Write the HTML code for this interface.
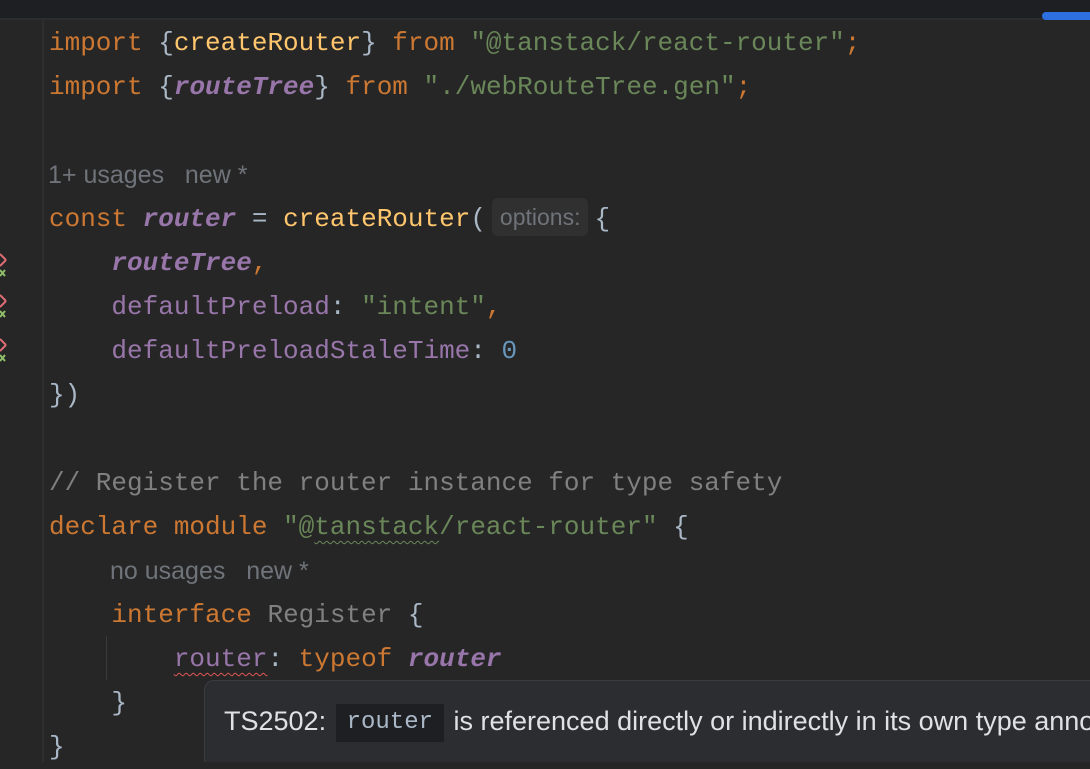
<!DOCTYPE html>
<html><head><meta charset="utf-8"><style>
html,body{margin:0;padding:0;}
body{width:1090px;height:762px;overflow:hidden;background:#262626;position:relative;font-family:"Liberation Mono",monospace;}
.top{position:absolute;left:0;top:0;width:1090px;height:18px;background:#1e1f22;}
.topline{position:absolute;left:0;top:18px;width:1090px;height:2px;background:#2b2d30;}
.blue{position:absolute;left:1042px;top:12px;width:48px;height:8px;border-radius:4px 0 0 4px;background:#2e6fdf;}
.div{position:absolute;left:42px;top:20px;width:2px;height:742px;background:#2e2e2e;}
.ln{position:absolute;left:49px;height:44px;line-height:44px;font-size:26px;white-space:pre;color:#bcbec4;}
.k{color:#cc7832}.s{color:#6a8759}.f{color:#ffc66d}.p{color:#9876aa}.pi{color:#9876aa;font-style:italic;font-weight:bold}.b{color:#a9b7c6}.n{color:#6897bb}.c{color:#808080}.g{color:#808080}
.hint{position:absolute;font-family:"Liberation Sans",sans-serif;font-size:25px;color:#6f737a;line-height:44px;white-space:pre;}
.ph{display:inline-block;background:#303030;border-radius:6px;padding:0 8px;height:38px;line-height:38px;font-family:"Liberation Sans",sans-serif;font-size:23px;color:#6f737a;vertical-align:middle;margin:0 6px 4px 6px;}
.wavy{text-decoration:underline wavy;text-underline-offset:6px;text-decoration-thickness:1px;}
.tip{position:absolute;left:204px;top:680px;width:885px;height:81px;background:#2b2d30;border:1px solid #3a3c40;border-right:none;border-bottom:none;border-radius:10px 0 0 0;overflow:hidden;}
.tiptext{position:absolute;left:19px;top:19px;height:42px;line-height:42px;font-family:"Liberation Sans",sans-serif;font-size:27px;color:#dfe1e5;white-space:pre;}
.chip{display:inline-block;background:#1e1f22;font-family:"Liberation Mono",monospace;font-size:24px;color:#a9b7c6;padding:0 11px;height:38px;line-height:38px;vertical-align:middle;margin:0 2px;}
.gi{position:absolute;left:0;width:10px;}
</style></head><body>
<div class="top"></div><div class="topline"></div><div class="blue"></div>
<div class="div"></div>
<svg class="gi" style="top:250px" width="10" height="30"><path d="M0 4 L6 10 M0 16 L6 10" stroke="#e06c75" stroke-width="2" fill="none"/><path d="M0 20 L5 26 M5 20 L0 26" stroke="#8fbf6a" stroke-width="2"/></svg>
<svg class="gi" style="top:291px" width="10" height="30"><path d="M0 4 L6 10 M0 16 L6 10" stroke="#e06c75" stroke-width="2" fill="none"/><path d="M0 20 L5 26 M5 20 L0 26" stroke="#8fbf6a" stroke-width="2"/></svg>
<svg class="gi" style="top:335px" width="10" height="30"><path d="M0 4 L6 10 M0 16 L6 10" stroke="#e06c75" stroke-width="2" fill="none"/><path d="M0 20 L5 26 M5 20 L0 26" stroke="#8fbf6a" stroke-width="2"/></svg>

<div class="ln" style="top:21px"><span class="k">import</span> <span class="b">{</span><span class="f">createRouter</span><span class="b">}</span> <span class="k">from</span> <span class="s">"@tanstack/react-router"</span><span class="k">;</span></div>
<div class="ln" style="top:65px"><span class="k">import</span> <span class="b">{</span><span class="pi">routeTree</span><span class="b">}</span> <span class="k">from</span> <span class="s">"./webRouteTree.gen"</span><span class="k">;</span></div>
<div class="hint" style="left:48px;top:153px">1+ usages   new *</div>
<div class="ln" style="top:197px"><span class="k">const</span> <span class="pi">router</span> <span class="b">=</span> <span class="f">createRouter</span><span class="b">(</span><span class="ph">options:</span><span class="b">{</span></div>
<div class="ln" style="top:241px">    <span class="pi">routeTree</span><span class="k">,</span></div>
<div class="ln" style="top:285px">    <span class="p">defaultPreload</span><span class="b">:</span> <span class="s">"intent"</span><span class="k">,</span></div>
<div class="ln" style="top:329px">    <span class="p">defaultPreloadStaleTime</span><span class="b">:</span> <span class="n">0</span></div>
<div class="ln" style="top:373px"><span class="b">})</span></div>
<div class="ln" style="top:461px"><span class="c">// Register the router instance for type safety</span></div>
<div class="ln" style="top:505px"><span class="k">declare</span> <span class="k">module</span> <span class="s">"@<span class="wavy" style="text-decoration-color:#6a8759">tanstack</span>/react-router"</span> <span class="b">{</span></div>
<div class="hint" style="left:110px;top:549px">no usages   new *</div>
<div class="ln" style="top:593px">    <span class="k">interface</span> <span class="g">Register</span> <span class="b">{</span></div>
<div style="position:absolute;left:106px;top:636px;width:1px;height:44px;background:#3a3a3a"></div>
<div class="ln" style="top:637px">        <span class="p wavy" style="text-decoration-color:#e05555">router</span><span class="b">:</span> <span class="k">typeof</span> <span class="pi">router</span></div>
<div class="ln" style="top:681px">    <span class="b">}</span></div>
<div class="ln" style="top:725px"><span class="b">}</span></div>

<div class="tip"><div class="tiptext">TS2502: <span class="chip">router</span> is referenced directly or indirectly in its own type annotation.</div></div>
</body></html>
